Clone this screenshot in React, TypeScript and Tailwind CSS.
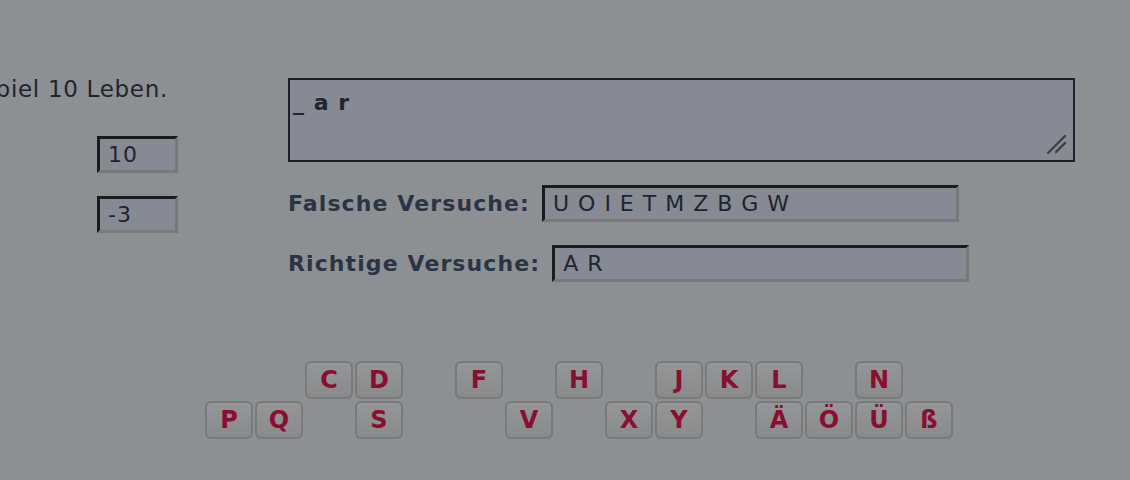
import React from 'react';

const row1 = ['A', 'B', 'C', 'D', 'E', 'F', 'G', 'H', 'I', 'J', 'K', 'L', 'M', 'N', 'O'];
const row2 = ['P', 'Q', 'R', 'S', 'T', 'U', 'V', 'W', 'X', 'Y', 'Z', 'Ä', 'Ö', 'Ü', 'ß'];
// letters already guessed are hidden from the keyboard
const used = ['A', 'R', 'U', 'O', 'I', 'E', 'T', 'M', 'Z', 'B', 'G', 'W'];

const insetBox =
  'h-[37px] border-[3px] border-t-[#1b1b1b] border-l-[#1b1b1b] border-r-[#797979] border-b-[#797979] bg-[#878a93] text-[#1e2430] text-[22px] tracking-[1px] px-[8px] outline-none';

const Key = ({ letter }: { letter: string }) => (
  <button
    className={`w-[48px] h-[38px] rounded-[6px] border-2 border-[#7a7a7a] bg-gradient-to-b from-[#959698] to-[#898a8c] text-[24px] font-bold text-[#8a0e30] flex items-center justify-center ${
      used.includes(letter) ? 'invisible' : ''
    }`}
  >
    {letter}
  </button>
);

const App = () => {
  return (
    <div className="min-h-screen w-[1130px] h-[480px] overflow-hidden bg-[#8d9093] font-['DejaVu_Sans',sans-serif]">
      <div className="flex pt-[77px]">
        {/* Spielstand */}
        <div className="w-[288px] shrink-0">
          <div className="w-[168px] flex justify-end overflow-hidden whitespace-nowrap text-[23px] tracking-[0.7px] leading-[24px] text-[#1e2430]">
            Sie haben in jedem Spiel 10 Leben.
          </div>
          <input readOnly value="10" className={`${insetBox} block ml-[97px] mt-[35px] w-[81px]`} />
          <input readOnly value="-3" className={`${insetBox} block ml-[97px] mt-[23px] w-[81px] px-[6px]`} />
        </div>

        {/* Wort und Versuche */}
        <div className="mt-[1px]">
          <div className="relative">
            <textarea
              readOnly
              value="_ a r"
              className="block w-[787px] h-[84px] resize-none border-2 border-[#1c212b] bg-[#878a93] text-[#1e2430] text-[22px] font-bold tracking-[1px] leading-[24px] pt-[11px] pl-[3px] outline-none"
            />
            <svg className="absolute right-[8px] bottom-[8px]" width="20" height="20" viewBox="0 0 20 20">
              <path d="M1 19 L18 2 M9 18 L18 9" stroke="#3b3f46" strokeWidth="2.4" strokeLinecap="round" />
            </svg>
          </div>
          <div className="flex items-center gap-[12px] mt-[23px]">
            <span className="text-[22px] font-bold tracking-[1.1px] text-[#2b3444]">Falsche Versuche:</span>
            <input readOnly value="U O I E T M Z B G W" className={`${insetBox} w-[417px] tracking-[1.5px]`} />
          </div>
          <div className="flex items-center gap-[12px] mt-[23px]">
            <span className="text-[22px] font-bold tracking-[1.1px] text-[#2b3444]">Richtige Versuche:</span>
            <input readOnly value="A R" className={`${insetBox} w-[417px] tracking-[1.5px]`} />
          </div>
        </div>
      </div>

      {/* Tastatur */}
      <div className="ml-[205px] mt-[79px] flex flex-col gap-[2px]">
        <div className="flex gap-[2px]">
          {row1.map((l) => (
            <Key key={l} letter={l} />
          ))}
        </div>
        <div className="flex gap-[2px]">
          {row2.map((l) => (
            <Key key={l} letter={l} />
          ))}
        </div>
      </div>
    </div>
  );
};

export default App;
